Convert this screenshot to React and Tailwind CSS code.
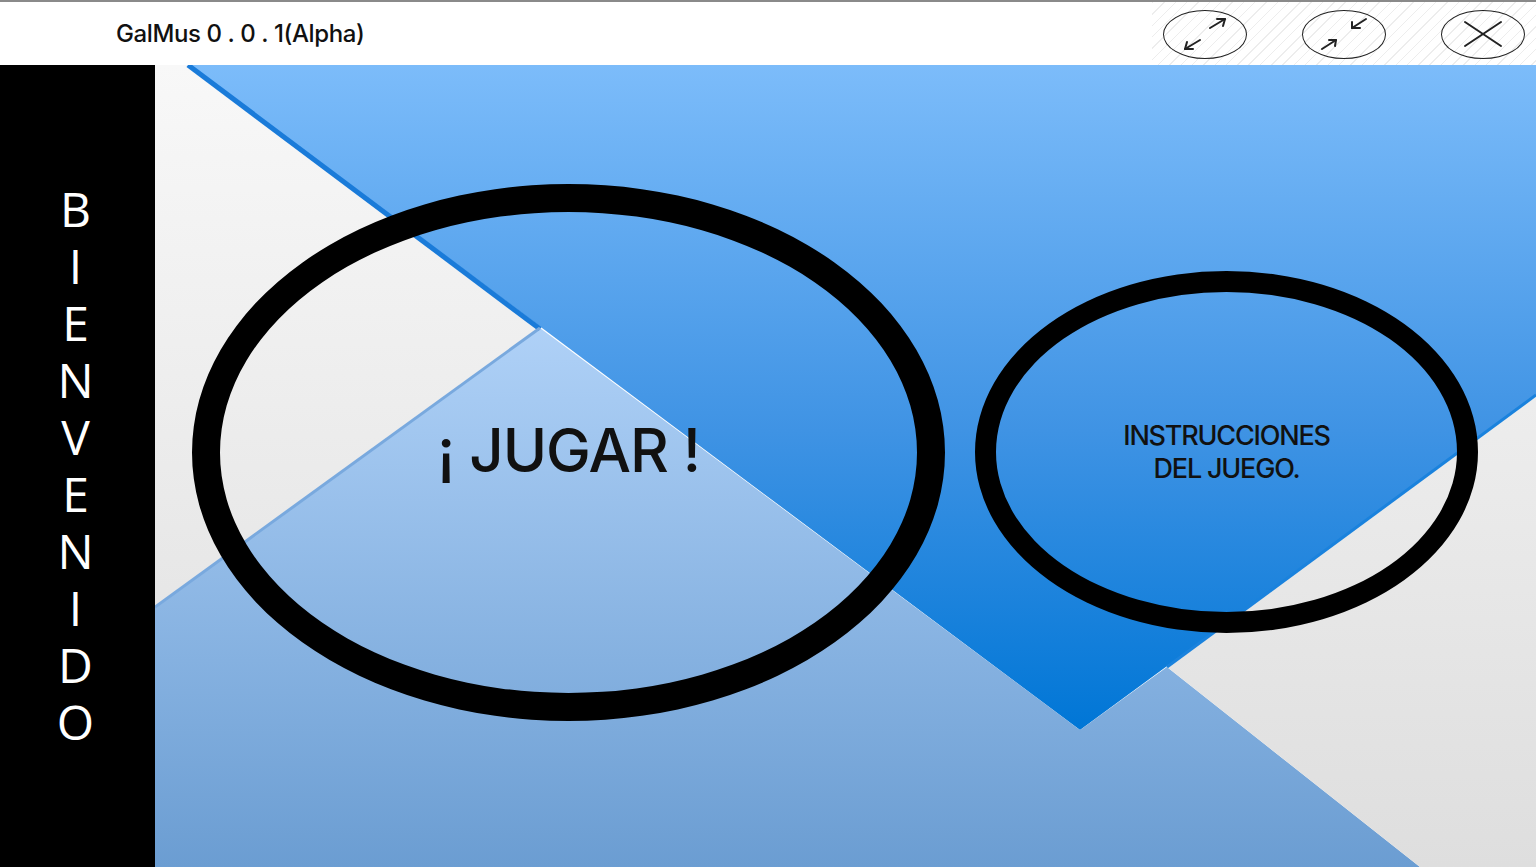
import React from "react";

function WindowButton({ children }) {
  return (
    <button className="w-[84px] h-[49px] rounded-[50%] border-[1.5px] border-[#222] flex items-center justify-center bg-transparent">
      {children}
    </button>
  );
}

function ExpandIcon() {
  return (
    <svg width="60" height="40" viewBox="0 0 60 40" fill="none" stroke="#222" strokeWidth="2" strokeLinecap="round" strokeLinejoin="round">
      <path d="M35 14 L50 5" />
      <path d="M42 5 L50 5 L48 12" />
      <path d="M25 26 L10 35" />
      <path d="M18 35 L10 35 L12 28" />
    </svg>
  );
}

function CollapseIcon() {
  return (
    <svg width="60" height="40" viewBox="0 0 60 40" fill="none" stroke="#222" strokeWidth="2" strokeLinecap="round" strokeLinejoin="round">
      <path d="M52 5 L38 14" />
      <path d="M38 8 L38 14 L46 14" />
      <path d="M8 35 L22 26" />
      <path d="M15 26 L22 26 L21 32" />
    </svg>
  );
}

function CloseIcon() {
  return (
    <svg width="60" height="40" viewBox="0 0 60 40" fill="none" stroke="#222" strokeWidth="2" strokeLinecap="round">
      <path d="M12 8 L48 32" />
      <path d="M48 8 L12 32" />
    </svg>
  );
}

function Backdrop() {
  return (
    <svg className="absolute inset-0 w-full h-full" viewBox="0 0 1381 802" preserveAspectRatio="none">
      <defs>
        <linearGradient id="deep" x1="0" y1="0" x2="0" y2="665" gradientUnits="userSpaceOnUse">
          <stop offset="0" stopColor="#7cbcfa" />
          <stop offset="0.55" stopColor="#3f93e4" />
          <stop offset="1" stopColor="#0076d6" />
        </linearGradient>
        <linearGradient id="soft" x1="0" y1="263" x2="0" y2="802" gradientUnits="userSpaceOnUse">
          <stop offset="0" stopColor="#afd1f7" />
          <stop offset="1" stopColor="#6b9dd2" />
        </linearGradient>
        <linearGradient id="pale" x1="0" y1="0" x2="0" y2="802" gradientUnits="userSpaceOnUse">
          <stop offset="0" stopColor="#f8f8f8" />
          <stop offset="1" stopColor="#dedede" />
        </linearGradient>
      </defs>
      <polygon points="0,0 35,0 385,263 0,542" fill="url(#pale)" />
      <polygon points="35,0 1381,0 1381,330 925,665" fill="url(#deep)" />
      <polygon points="0,542 385,263 925,665 1012,602 1265,802 0,802" fill="url(#soft)" />
      <polygon points="1381,330 1012,602 1265,802 1381,802" fill="url(#pale)" />
      <line x1="33" y1="0" x2="385" y2="264" stroke="#1a7bd9" strokeWidth="5" />
      <line x1="0" y1="542" x2="385" y2="263" stroke="#79a9de" strokeWidth="3" />
      <line x1="1381" y1="330" x2="1012" y2="602" stroke="#1a82dd" strokeWidth="3" />
    </svg>
  );
}

export default function App() {
  const letters = "BIENVENIDO".split("");

  return (
    <div className="w-[1536px] h-[867px] flex flex-col overflow-hidden bg-white font-['Open_Sans',sans-serif]">
      <header className="h-[65px] shrink-0 border-t-2 border-[#8a8a8a] flex items-center justify-between bg-[linear-gradient(to_right,#ffffff_0%,#ffffff_75%,transparent_75%),repeating-linear-gradient(135deg,#ffffff_0px,#ffffff_7px,#ededed_7px,#ededed_8px)]">
        <h1 className="pl-[116px] text-[24px] text-[#111] font-['Inter',sans-serif] font-medium tracking-[-0.4px]">
          GalMus 0 . 0 . 1(Alpha)
        </h1>
        <div className="flex items-center gap-[55px] pr-[11px] pt-[1px]">
          <WindowButton>
            <ExpandIcon />
          </WindowButton>
          <WindowButton>
            <CollapseIcon />
          </WindowButton>
          <WindowButton>
            <CloseIcon />
          </WindowButton>
        </div>
      </header>

      <div className="flex flex-1">
        <aside className="w-[155px] shrink-0 bg-black flex flex-col items-center pt-[115px]">
          {letters.map((l, i) => (
            <span key={i} className="h-[57px] flex items-center justify-center leading-none text-[48px] text-white font-['Open_Sans',sans-serif] pr-[4px]">
              {l}
            </span>
          ))}
        </aside>

        <main className="relative flex-1 flex items-center pl-[37px] pb-[28px] gap-[30px]">
          <Backdrop />
          <button className="relative w-[753px] h-[537px] rounded-[50%] border-[28px] border-black flex items-center justify-center">
            <span className="text-[60px] text-[#111] font-['Inter',sans-serif] font-medium tracking-[-1px] mt-[-4px]">
              ¡ JUGAR !
            </span>
          </button>
          <button className="relative w-[503px] h-[362px] rounded-[50%] border-[21px] border-black flex items-center justify-center">
            <span className="text-[27px] leading-[33px] text-[#111] font-['Inter',sans-serif] font-medium tracking-[-1.2px] text-center">
              INSTRUCCIONES
              <br />
              DEL JUEGO.
            </span>
          </button>
        </main>
      </div>
    </div>
  );
}
